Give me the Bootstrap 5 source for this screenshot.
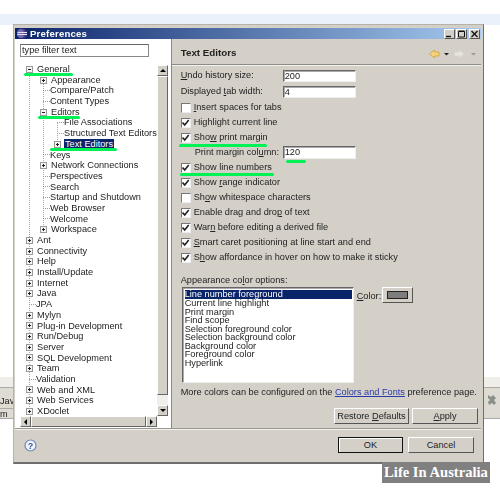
<!DOCTYPE html>
<html lang="en">
<head>
    <meta charset="UTF-8">
    <meta name="viewport" content="width=device-width, initial-scale=1.0">
    <title>Preferences</title>
    <link rel="stylesheet" href="https://cdn.jsdelivr.net/npm/bootstrap@5.3.0/dist/css/bootstrap.min.css">
    <style>
        body { background: #fff; font-family: "Liberation Sans", Arial, sans-serif; font-size: 9.2px; color: #222; width: 500px; height: 493px; overflow: hidden; position: relative; filter: blur(.3px); }
        u { text-underline-offset: 1px; }
        .top-band { position: absolute; left: 0; right: 0; top: 14px; height: 11px; background: #e9f1fb; }
        .back-left, .back-right { position: absolute; top: 377px; height: 42px; background: #efeee9; border-bottom: 1px solid #aaa; overflow: hidden; }
        .back-left { left: 0; width: 14px; }
        .back-right { left: 484px; width: 16px; }
        .back-row { margin-top: 10px; height: 21px; border-top: 1px solid #aaa; background: #dedbd3; padding-top: 7px; line-height: 12px; }
        .back-row2 { height: 10px; border-top: 1px solid #aaa; background: #dedbd3; line-height: 10px; }
        .back-right .back-row { padding: 5px 0 0 3px; height: 31px; }
        .win { position: absolute; left: 13px; top: 24px; width: 471px; height: 440px; background: #d4d0c8; border: 1px solid #b5b2aa; border-right-color: #6e6e6e; border-bottom: 2px solid #6e6e6e; padding: 3px 2px 0 1px; }
        .title-bar { height: 11px; background: linear-gradient(90deg, #0a246a, #a6caf0); color: #fff; font-weight: bold; font-size: 9.6px; letter-spacing: .2px; line-height: 11px; padding-left: 2px; }
        .title-ico { margin-right: 3px; }
        .win-ctl { width: 11px; height: 10px; margin-left: 1px; background: #d4d0c8; border: 1px solid; border-color: #fff #555 #555 #fff; color: #111; display: flex; align-items: center; justify-content: center; }
        .win-ctl.ctl-close { margin-left: 2px; margin-right: 1px; }
        .pane-left { width: 156px; height: 389px; background: #fff; position: relative; }
        .filter-box { position: absolute; left: 5px; top: 5px; width: 129px; height: 13px; border: 1px solid #888; border-top-color: #666; line-height: 11px; padding-left: 1px; color: #222; }
        .tree { position: absolute; left: 0; top: 25px; width: 142px; font-size: 9.2px; overflow: hidden; }
        .tree-row { height: 10.69px; line-height: 10.69px; white-space: nowrap; position: relative; display: flex; align-items: center; }
        .lvl0 { padding-left: 11px; }
        .lvl1 { padding-left: 25px; }
        .lvl2 { padding-left: 39px; }
        .xp { width: 7px; height: 7px; border: 1px solid #999; background: #f4f4f4; margin-right: 4px; flex: none; position: relative; z-index: 1; }
        .xp::before { content: ""; position: absolute; left: 1px; right: 1px; top: 2px; height: 1px; background: #222; }
        .xp-plus::after { content: ""; position: absolute; top: 1px; bottom: 1px; left: 2px; width: 1px; background: #222; }
        .xp-none { width: 7px; height: 1px; background: none; border: 0; border-top: 1px dotted #999; margin-left: 3px; margin-right: 0; }
        .xp-none::before { display: none; }
        .sel-row { background: #0a246a; color: #fff; padding: 0 1px; line-height: 10px; margin-left: -1px; }
        .guide { position: absolute; width: 0; border-left: 1px dotted #aaa; }
        .guide-a { left: 14px; top: 9px; height: 342px; }
        .guide-b { left: 28px; top: 16px; height: 149px; }
        .guide-c { left: 42px; top: 58px; height: 22px; }
        .vbar { position: absolute; left: 142px; top: 26px; width: 11px; height: 351px; background: #f0efeb; display: flex; flex-direction: column; }
        .hbar { position: absolute; left: 5px; top: 377px; width: 137px; height: 11px; background: #f0efeb; display: flex; }
        .bar-btn { width: 11px; height: 11px; flex: none; background: #d4d0c8; border: 1px solid; border-color: #fff #666 #666 #fff; display: flex; align-items: center; justify-content: center; }
        .bar-thumb { background: #d4d0c8; border: 1px solid; border-color: #fff #666 #666 #fff; }
        .vbar .bar-thumb { height: 319px; }
        .hbar .bar-thumb { flex: 1; }
        .tri-u, .tri-d, .tri-l, .tri-r { width: 0; height: 0; border: 3px solid transparent; }
        .tri-u { border-bottom-color: #000; border-top: 0; }
        .tri-d { border-top-color: #000; border-bottom: 0; }
        .tri-l { border-right-color: #000; border-left: 0; }
        .tri-r { border-left-color: #000; border-right: 0; }
        .pane-right { width: 311px; height: 389px; border-left: 1px solid #888; }
        .head-area { height: 26px; padding: 4px 5px 0 9px; border-bottom: 1px solid #8d8b85; box-shadow: 0 1px 0 #f3f2ee; }
        .head-title { font-weight: bold; font-size: 9.8px; }
        .pane-form { padding: 3px 0 0 9px; white-space: nowrap; }
        .form-line { height: 16px; }
        .form-label-w { width: 102px; }
        .win-input { width: 73px; height: 12.5px; background: #fff; border: 1px solid; border-color: #666 #eee #eee #666; box-shadow: inset 1px 1px 0 #aaa; line-height: 11px; padding-left: 1px; }
        .check-line { height: 15.05px; gap: 3px; white-space: nowrap; }
        .form-check-input.win-check { width: 10px; height: 10px; margin: 0; flex: none; border-radius: 0; background-color: #fff; border: 1px solid; border-color: #777 #eee #eee #777; box-shadow: none; opacity: 1; }
        .form-check-input.win-check:checked { background-color: #fff; background-size: 10px; background-image: url("data:image/svg+xml,%3csvg xmlns='http://www.w3.org/2000/svg' viewBox='0 0 10 10'%3e%3cpath fill='none' stroke='%23222' stroke-width='1.6' d='M1.5 4.5l2.2 2.4 4-5'/%3e%3c/svg%3e"); }
        .margin-col { padding-left: 14px; height: 15px; }
        .margin-col .form-label-w { width: 88px; }
        .appear-label { margin-top: 10px; height: 10px; line-height: 10px; }
        .list-area { margin-top: 2px; }
        .color-list { width: 172px; height: 96px; margin-left: 1px; background: #fff; border: 1px solid; border-color: #666 #eee #eee #666; box-shadow: inset 1px 1px 0 #aaa; padding: 2px 1px 0 2px; }
        .color-list div { height: 8.55px; line-height: 8.55px; white-space: nowrap; }
        .color-list .picked { background: #0a246a; color: #fff; }
        .color-label { width: 28px; padding: 3px 0 0 3px; }
        .color-btn { width: 31px; height: 16px; background: #d4d0c8; border: 1px solid; border-color: #fff #555 #555 #fff; padding: 3px 4px; }
        .color-btn span { display: block; height: 100%; background: #7d7d7d; border: 1px solid #222; }
        .more-line { margin-top: 3px; height: 12px; line-height: 12px; white-space: nowrap; }
        .more-line a { color: #2a3aa8; }
        .win-btn { height: 16px; padding: 0; font-size: 9.2px; line-height: 13px; color: #222; background: #d4d0c8; border: 1px solid; border-color: #fff #555 #555 #fff; border-radius: 0; white-space: nowrap; }
        .win-btn.default-btn { border-color: #111; box-shadow: inset 1px 1px 0 #fff; }
        .w-restore { width: 75px; }
        .w-apply { width: 66px; }
        .w-ok { width: 65px; }
        .w-cancel { width: 66px; }
        .page-btns { margin-top: 10px; padding-right: 3px; gap: 3px; }
        .win-foot { height: 34px; border-top: 1px solid #99968e; box-shadow: inset 0 1px 0 #f3f2ee; padding: 8px 7px 0 9px; }
        .foot-gap { gap: 5px; }
        .help-ico { margin-top: 2px; }
        .mark-line { position: absolute; background: #00f255; border-radius: 2px; height: 3px; }
        .m1 { left: 24px; top: 73px; width: 49px; }
        .m2 { left: 38px; top: 116px; width: 42px; }
        .m3 { left: 50px; top: 148px; width: 67px; }
        .m4 { left: 179px; top: 143.5px; width: 88px; }
        .m5 { left: 286px; top: 159.5px; width: 20px; }
        .m6 { left: 180px; top: 172.5px; width: 94px; }
        .watermark { position: absolute; left: 382px; top: 462px; width: 108px; height: 21px; background: #808080; color: #fff; font-family: "Liberation Serif", serif; font-weight: bold; font-size: 14.6px; line-height: 21px; text-align: center; white-space: nowrap; }
    </style>
</head>
<body>
    <div class="top-band"></div>
    <div class="back-left"><div class="back-row">Jav</div><div class="back-row2">m_(</div></div>
    <div class="back-right"><div class="back-row"><svg width="10" height="12" viewBox="0 0 10 12"><path d="M1 1l3 2 2-2 3 3-2 2 2 3-2 2-2-2-3 2-1-3 2-2-2-2z" fill="#8b8f8a"/></svg></div></div>

    <div class="win d-flex flex-column">
        <div class="title-bar d-flex align-items-center">
            <svg class="title-ico" width="10" height="11" viewBox="0 0 10 11"><circle cx="5" cy="5.500" r="5" fill="#4a3f8f"/><path d="M.5 4.500h9.500M.2 6.500h9.800" stroke="#fff" stroke-width=".9"/><ellipse cx="3.500" cy="5.500" rx="3.500" ry="4.500" fill="#c7c0e8" opacity=".35"/></svg>
            <span>Preferences</span>
            <div class="d-flex ms-auto">
                <div class="win-ctl"><svg width="9" height="8" viewBox="0 0 9 8"><path d="M1 6.500h5" stroke="#111" stroke-width="1.400"/></svg></div>
                <div class="win-ctl"><svg width="9" height="8" viewBox="0 0 9 8"><path d="M1.500 1.500h6v5.500h-6zM1.500 1h6" fill="none" stroke="#111"/></svg></div>
                <div class="win-ctl ctl-close"><svg width="9" height="8" viewBox="0 0 9 8"><path d="M1.500 1l6 6M7.500 1l-6 6" stroke="#111" stroke-width="1.300"/></svg></div>
            </div>
        </div>

        <div class="d-flex">
            <div class="pane-left">
                <div class="filter-box">type filter text</div>
                <div class="tree">
                    <div class="guide guide-a"></div>
                    <div class="guide guide-b"></div>
                    <div class="guide guide-c"></div>
                    <div class="tree-row lvl0"><span class="xp"></span>General</div>
                    <div class="tree-row lvl1"><span class="xp xp-plus"></span>Appearance</div>
                    <div class="tree-row lvl1"><span class="xp xp-none"></span>Compare/Patch</div>
                    <div class="tree-row lvl1"><span class="xp xp-none"></span>Content Types</div>
                    <div class="tree-row lvl1"><span class="xp"></span>Editors</div>
                    <div class="tree-row lvl2"><span class="xp xp-none"></span>File Associations</div>
                    <div class="tree-row lvl2"><span class="xp xp-none"></span>Structured Text Editors</div>
                    <div class="tree-row lvl2"><span class="xp xp-plus"></span><span class="sel-row">Text Editors</span></div>
                    <div class="tree-row lvl1"><span class="xp xp-none"></span>Keys</div>
                    <div class="tree-row lvl1"><span class="xp xp-plus"></span>Network Connections</div>
                    <div class="tree-row lvl1"><span class="xp xp-none"></span>Perspectives</div>
                    <div class="tree-row lvl1"><span class="xp xp-none"></span>Search</div>
                    <div class="tree-row lvl1"><span class="xp xp-none"></span>Startup and Shutdown</div>
                    <div class="tree-row lvl1"><span class="xp xp-none"></span>Web Browser</div>
                    <div class="tree-row lvl1"><span class="xp xp-none"></span>Welcome</div>
                    <div class="tree-row lvl1"><span class="xp xp-plus"></span>Workspace</div>
                    <div class="tree-row lvl0"><span class="xp xp-plus"></span>Ant</div>
                    <div class="tree-row lvl0"><span class="xp xp-plus"></span>Connectivity</div>
                    <div class="tree-row lvl0"><span class="xp xp-plus"></span>Help</div>
                    <div class="tree-row lvl0"><span class="xp xp-plus"></span>Install/Update</div>
                    <div class="tree-row lvl0"><span class="xp xp-plus"></span>Internet</div>
                    <div class="tree-row lvl0"><span class="xp xp-plus"></span>Java</div>
                    <div class="tree-row lvl0"><span class="xp xp-none"></span>JPA</div>
                    <div class="tree-row lvl0"><span class="xp xp-plus"></span>Mylyn</div>
                    <div class="tree-row lvl0"><span class="xp xp-plus"></span>Plug-in Development</div>
                    <div class="tree-row lvl0"><span class="xp xp-plus"></span>Run/Debug</div>
                    <div class="tree-row lvl0"><span class="xp xp-plus"></span>Server</div>
                    <div class="tree-row lvl0"><span class="xp xp-plus"></span>SQL Development</div>
                    <div class="tree-row lvl0"><span class="xp xp-plus"></span>Team</div>
                    <div class="tree-row lvl0"><span class="xp xp-none"></span>Validation</div>
                    <div class="tree-row lvl0"><span class="xp xp-plus"></span>Web and XML</div>
                    <div class="tree-row lvl0"><span class="xp xp-plus"></span>Web Services</div>
                    <div class="tree-row lvl0"><span class="xp xp-plus"></span>XDoclet</div>
                </div>
                <div class="vbar">
                    <div class="bar-btn"><span class="tri-u"></span></div>
                    <div class="bar-thumb"></div>
                    <div class="flex-grow-1"></div>
                    <div class="bar-btn"><span class="tri-d"></span></div>
                </div>
                <div class="hbar">
                    <div class="bar-btn"><span class="tri-l"></span></div>
                    <div class="bar-thumb"></div>
                    <div class="bar-btn"><span class="tri-r"></span></div>
                </div>
            </div>

            <div class="pane-right">
                <div class="head-area d-flex align-items-center">
                    <span class="head-title">Text Editors</span>
                    <svg class="ms-auto" width="47" height="10" viewBox="0 0 47 10">
                        <path d="M.5 5l5-4v2h4.500v4H5.500v2z" fill="#f5d37a" stroke="#c9a24a" stroke-width=".8"/>
                        <path d="M15 4h5l-2.500 2.500z" fill="#222"/>
                        <path d="M35 5l-5-4v2h-4.500v4H30v2z" fill="#e6e3dc" stroke="#d9d6ce" stroke-width=".8"/>
                        <path d="M42 4h5l-2.500 2.500z" fill="#999"/>
                    </svg>
                </div>
                <div class="pane-form">
                    <div class="form-line d-flex align-items-center"><span class="form-label-w"><u>U</u>ndo history size:</span><div class="win-input">200</div></div>
                    <div class="form-line d-flex align-items-center"><span class="form-label-w">Displayed <u>t</u>ab width:</span><div class="win-input">4</div></div>
                    <div class="check-line d-flex align-items-center"><input class="form-check-input win-check" type="checkbox"><span><u>I</u>nsert spaces for tabs</span></div>
                    <div class="check-line d-flex align-items-center"><input class="form-check-input win-check" type="checkbox" checked><span>Hi<u>g</u>hlight current line</span></div>
                    <div class="check-line d-flex align-items-center"><input class="form-check-input win-check" type="checkbox" checked><span>Sho<u>w</u> print margin</span></div>
                    <div class="margin-col d-flex align-items-center"><span class="form-label-w">Print margin col<u>u</u>mn:</span><div class="win-input">120</div></div>
                    <div class="check-line d-flex align-items-center"><input class="form-check-input win-check" type="checkbox" checked><span>Show line numbers</span></div>
                    <div class="check-line d-flex align-items-center"><input class="form-check-input win-check" type="checkbox" checked><span>Show <u>r</u>ange indicator</span></div>
                    <div class="check-line d-flex align-items-center"><input class="form-check-input win-check" type="checkbox"><span>Sh<u>o</u>w whitespace characters</span></div>
                    <div class="check-line d-flex align-items-center"><input class="form-check-input win-check" type="checkbox" checked><span>Enable drag and dro<u>p</u> of text</span></div>
                    <div class="check-line d-flex align-items-center"><input class="form-check-input win-check" type="checkbox" checked><span>War<u>n</u> before editing a derived file</span></div>
                    <div class="check-line d-flex align-items-center"><input class="form-check-input win-check" type="checkbox" checked><span><u>S</u>mart caret positioning at line start and end</span></div>
                    <div class="check-line d-flex align-items-center"><input class="form-check-input win-check" type="checkbox" checked><span>S<u>h</u>ow affordance in hover on how to make it sticky</span></div>
                    <div class="appear-label">Appearance co<u>l</u>or options:</div>
                    <div class="list-area d-flex">
                        <div class="color-list">
                            <div class="picked">Line number foreground</div>
                            <div>Current line highlight</div>
                            <div>Print margin</div>
                            <div>Find scope</div>
                            <div>Selection foreground color</div>
                            <div>Selection background color</div>
                            <div>Background color</div>
                            <div>Foreground color</div>
                            <div>Hyperlink</div>
                        </div>
                        <span class="color-label"><u>C</u>olor:</span>
                        <div class="color-btn"><span></span></div>
                    </div>
                    <div class="more-line">More colors can be configured on the <a href="#">Colors and Fonts</a> preference page.</div>
                    <div class="page-btns d-flex justify-content-end">
                        <button type="button" class="btn win-btn w-restore">Restore <u>D</u>efaults</button>
                        <button type="button" class="btn win-btn w-apply"><u>A</u>pply</button>
                    </div>
                </div>
            </div>
        </div>

        <div class="win-foot d-flex align-items-start">
            <svg class="help-ico" width="13" height="13" viewBox="0 0 13 13"><circle cx="6.500" cy="6.500" r="5.500" fill="#eef2fa" stroke="#6d87b8" stroke-width="1.200"/><text x="6.500" y="10" text-anchor="middle" font-size="9" font-weight="bold" font-family="Liberation Sans" fill="#3c5a96">?</text></svg>
            <div class="d-flex ms-auto foot-gap">
                <button type="button" class="btn win-btn default-btn w-ok">OK</button>
                <button type="button" class="btn win-btn w-cancel">Cancel</button>
            </div>
        </div>
    </div>

    <div class="mark-line m1"></div>
    <div class="mark-line m2"></div>
    <div class="mark-line m3"></div>
    <div class="mark-line m4"></div>
    <div class="mark-line m5"></div>
    <div class="mark-line m6"></div>
    <div class="watermark">Life In Australia</div>

    <script src="https://cdn.jsdelivr.net/npm/bootstrap@5.3.0/dist/js/bootstrap.bundle.min.js"></script>
</body>
</html>
